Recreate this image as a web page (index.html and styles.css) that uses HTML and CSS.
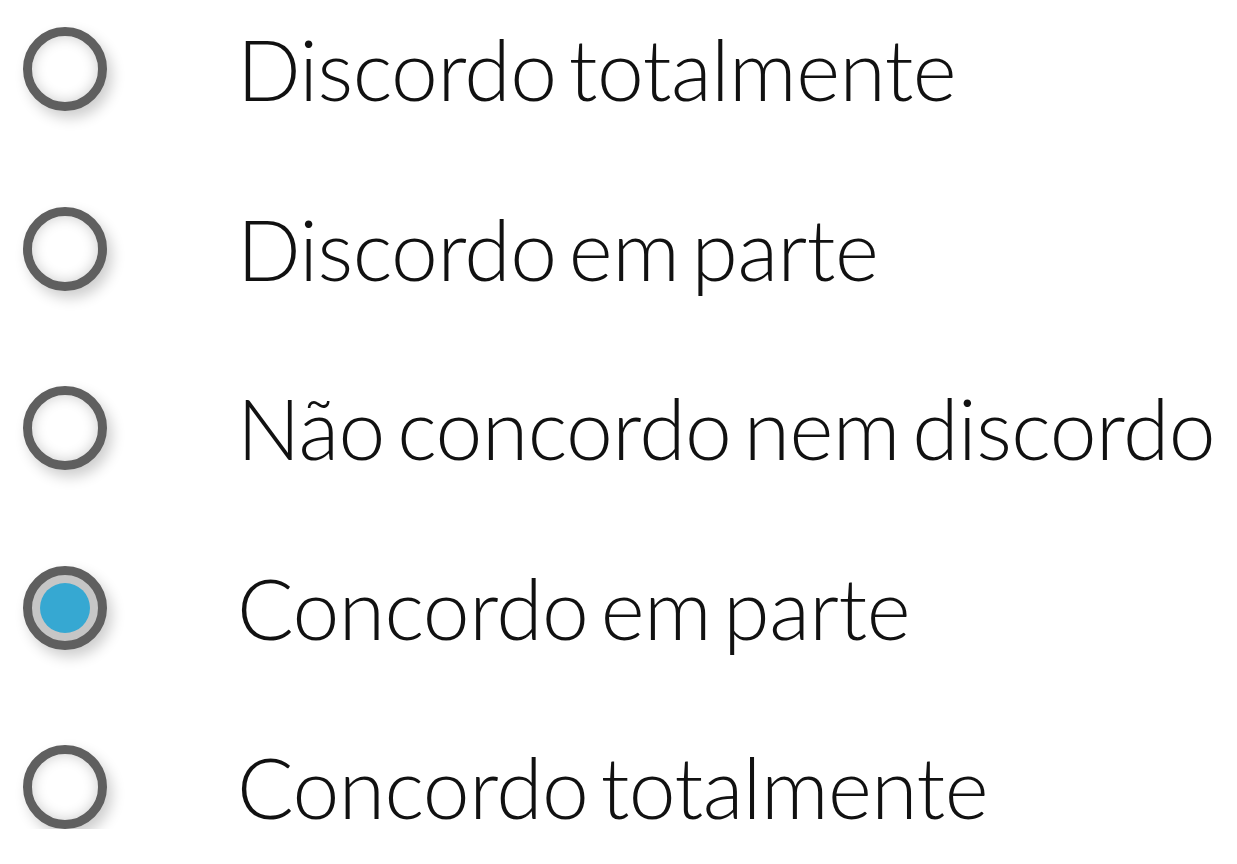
FILE: index.html
```html
<!DOCTYPE html>
<html lang="pt">
<head>
    <meta charset="UTF-8">
    <meta name="viewport" content="width=device-width, initial-scale=1.0">
    <title>Escala</title>
    <link rel="stylesheet" href="styles.css">
</head>

<body>
    <form class="scale">
        <!-- Likert options -->
        <label class="option">
            <input type="radio" name="answer" value="1" />
            <span class="mark"></span>
            <span class="text">Discordo totalmente</span>
        </label>
        <label class="option">
            <input type="radio" name="answer" value="2" />
            <span class="mark"></span>
            <span class="text">Discordo em parte</span>
        </label>
        <label class="option">
            <input type="radio" name="answer" value="3" />
            <span class="mark"></span>
            <span class="text">Não concordo nem discordo</span>
        </label>
        <label class="option">
            <input type="radio" name="answer" value="4" checked />
            <span class="mark"></span>
            <span class="text">Concordo em parte</span>
        </label>
        <label class="option">
            <input type="radio" name="answer" value="5" />
            <span class="mark"></span>
            <span class="text">Concordo totalmente</span>
        </label>
    </form>
</body>
</html>
```

FILE: styles.css
```css
/* scale styling */
* {
    margin: 0;
    padding: 0;
    box-sizing: border-box;
}
body {
    background: #fff;
    font-family: Lato, "Open Sans", sans-serif;
    color: #111;
}
.scale {
    display: flex;
    flex-direction: column;
    gap: 95.5px;
    padding: 27px 0 0 23px;
}
.option {
    display: flex;
    align-items: center;
    cursor: pointer;
}
.option input {
    display: none;
}
.mark {
    flex: none;
    width: 84px;
    height: 84px;
    border: 9px solid #5f5f5f;
    border-radius: 50%;
    background: #fff;
    box-shadow: inset 0 0 14px rgba(0, 0, 0, 0.2), 5px 7px 14px rgba(0, 0, 0, 0.2);
    display: flex;
    align-items: center;
    justify-content: center;
}
.option input:checked + .mark {
    background: #c6c6c6;
    box-shadow: 5px 7px 14px rgba(0, 0, 0, 0.2);
}
.option input:checked + .mark::after {
    content: "";
    width: 50px;
    height: 50px;
    border-radius: 50%;
    background: #36a8d2;
}
.text {
    margin-left: 130px;
    font-size: 84px;
    font-weight: 300;
    line-height: 1;
    letter-spacing: -0.5px;
    word-spacing: -10px;
    white-space: nowrap;
}
```
